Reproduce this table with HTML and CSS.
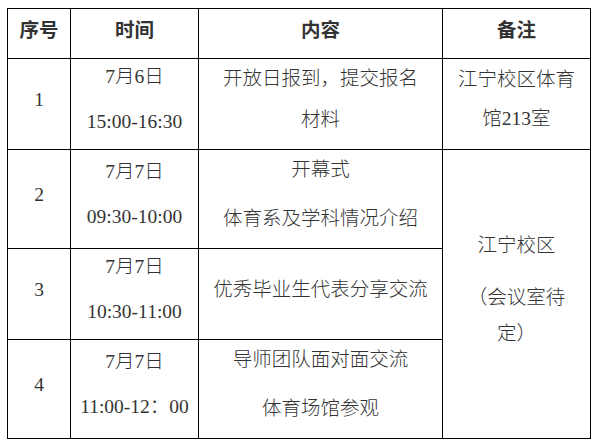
FILE: index.html
```html
<!DOCTYPE html>
<html lang="zh-CN">
<head>
<meta charset="utf-8">
<title>日程安排</title>
<link rel="stylesheet" href="styles.css">
</head>
<body>
<table class="sched">
  <colgroup>
    <col class="c-no">
    <col class="c-time">
    <col class="c-content">
    <col class="c-note">
  </colgroup>
  <thead>
    <tr class="r-head">
      <th>序号</th>
      <th>时间</th>
      <th>内容</th>
      <th>备注</th>
    </tr>
  </thead>
  <tbody>
    <tr class="r-a">
      <td>1</td>
      <td><div class="ln t">7月6日</div><div class="ln t">15:00-16:30</div></td>
      <td><div class="ln c1">开放日报到，提交报名</div><div class="ln c1">材料</div></td>
      <td><div class="ln n1">江宁校区体育</div><div class="ln n1">馆213室</div></td>
    </tr>
    <tr class="r-b">
      <td>2</td>
      <td><div class="ln t">7月7日</div><div class="ln t">09:30-10:00</div></td>
      <td><div class="ln c2">开幕式</div><div class="ln c2">体育系及学科情况介绍</div></td>
      <td rowspan="3" class="span">
        <div class="ln s1">江宁校区</div>
        <div class="ln s2">（会议室待</div>
        <div class="ln s2">定）</div>
      </td>
    </tr>
    <tr class="r-a">
      <td>3</td>
      <td><div class="ln t">7月7日</div><div class="ln t">10:30-11:00</div></td>
      <td>优秀毕业生代表分享交流</td>
    </tr>
    <tr class="r-b">
      <td>4</td>
      <td><div class="ln t">7月7日</div><div class="ln t">11:00-12：00</div></td>
      <td><div class="ln c2">导师团队面对面交流</div><div class="ln c2">体育场馆参观</div></td>
    </tr>
  </tbody>
</table>
</body>
</html>
```

FILE: styles.css
```css
html, body {
  margin: 0;
  padding: 0;
  background: #ffffff;
}

body {
  padding: 8px 0 0 7px;
  font-family: "Liberation Serif", "Noto Sans CJK SC", serif;
  font-size: 19.5px;
  color: #333333;
}

.sched {
  border-collapse: collapse;
  table-layout: fixed;
  width: 584px;
}

.c-no { width: 63px; }
.c-time { width: 128px; }
.c-content { width: 244px; }
.c-note { width: 148px; }

.sched th,
.sched td {
  border: 1px solid #000000;
  padding: 0 0 9px 0;
  text-align: center;
  vertical-align: middle;
  white-space: nowrap;
  line-height: 24px;
}

.sched td {
  font-weight: 300;
}

.sched th {
  font-family: "Noto Sans CJK SC", sans-serif;
  font-weight: 700;
  color: #333333;
}

.r-head { height: 50px; }
.r-a { height: 91px; }
.r-b { height: 99px; }

.ln { line-height: 24px; }
.t + .t { margin-top: 21px; }
.c1 + .c1 { margin-top: 17px; }
.c2 + .c2 { margin-top: 25px; }
.n1 + .n1 { margin-top: 15px; }
.s1 + .s2 { margin-top: 28px; }
.s2 + .s2 { margin-top: 12px; }
```
